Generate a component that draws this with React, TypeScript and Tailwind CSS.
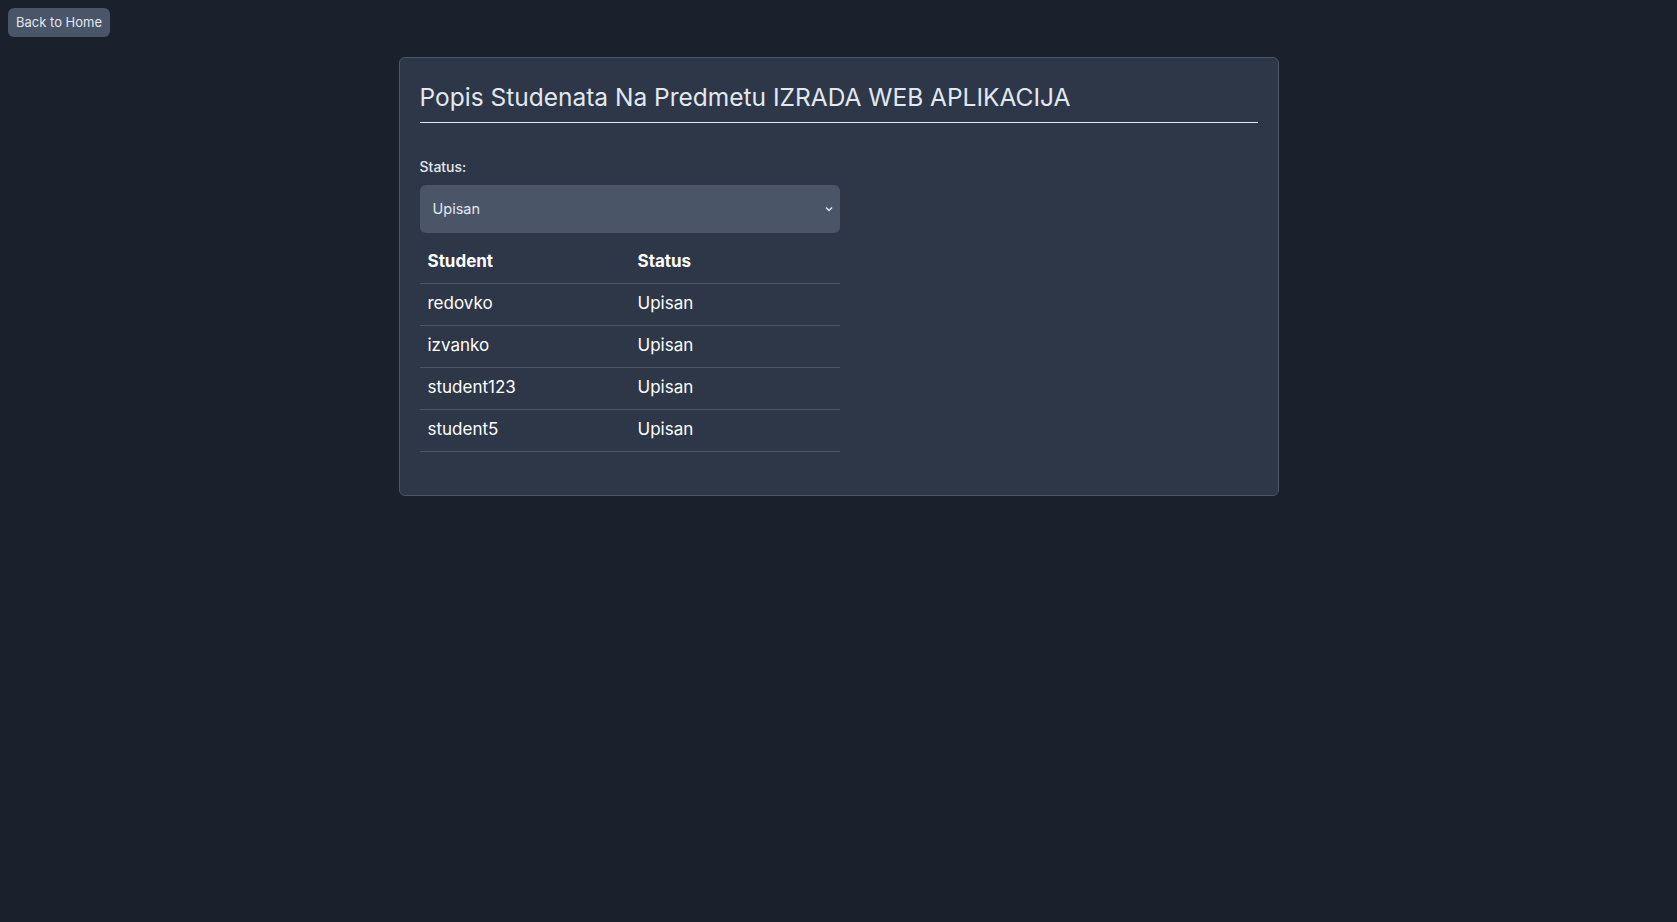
import { useState } from "react";

const studenti = [
    { id: 1, ime: "redovko", status: "Upisan" },
    { id: 2, ime: "izvanko", status: "Upisan" },
    { id: 3, ime: "student123", status: "Upisan" },
    { id: 4, ime: "student5", status: "Upisan" },
];

const App = () => {
    const [status, setStatus] = useState("Upisan");

    return (
        <div className="min-h-screen bg-[#1a202c] font-['Inter','Noto_Sans',sans-serif] text-[#e2e8f0]">
            <div className="p-2">
                <button className="bg-[#4a5568] text-[#e2e8f0] text-[13px] leading-[17px] px-2 py-1.5 rounded-md">
                    Back to Home
                </button>
            </div>

            <div className="w-[880px] mx-auto mt-3 bg-[#2d3748] border border-[#4a5568] rounded-md p-5 pb-0">
                <h1 className="text-[24.5px] leading-8 pt-[3px] pb-[9px] border-b border-[#e2e8f0] text-[#e2e8f0]">
                    Popis Studenata Na Predmetu IZRADA WEB APLIKACIJA
                </h1>

                <div className="mt-[34px] w-[420px]">
                    <label className="block text-sm font-medium leading-5 mb-2">Status:</label>
                    <div className="relative">
                        <select
                            value={status}
                            onChange={(e) => setStatus(e.target.value)}
                            className="w-full h-12 appearance-none bg-[#4a5568] text-[#e2e8f0] text-[14.5px] rounded-md pl-[13px] pr-8 outline-none"
                        >
                            <option>Upisan</option>
                            <option>Ispisan</option>
                            <option>Položen</option>
                        </select>
                        <svg className="absolute right-[6px] top-1/2 -translate-y-1/2 w-[10px] h-[10px] pointer-events-none text-[#e2e8f0]" viewBox="0 0 10 10" fill="none" stroke="currentColor" strokeWidth={1.5}>
                            <path d="M2 3.5l3 3 3-3" />
                        </svg>
                    </div>

                    <table className="w-full mt-2 mb-[43px] text-left table-fixed border-collapse text-[17px]">
                        <thead>
                            <tr className="border-b border-[#4a5568]">
                                <th className="px-2 h-[42px] font-bold text-white">Student</th>
                                <th className="px-2 h-[42px] font-bold text-white">Status</th>
                            </tr>
                        </thead>
                        <tbody>
                            {studenti.map((s) => (
                                <tr key={s.id} className="border-b border-[#4a5568]">
                                    <td className="px-2 h-[42px] text-white">{s.ime}</td>
                                    <td className="px-2 h-[42px] text-white">{s.status}</td>
                                </tr>
                            ))}
                        </tbody>
                    </table>
                </div>
            </div>
        </div>
    );
};

export default App;
